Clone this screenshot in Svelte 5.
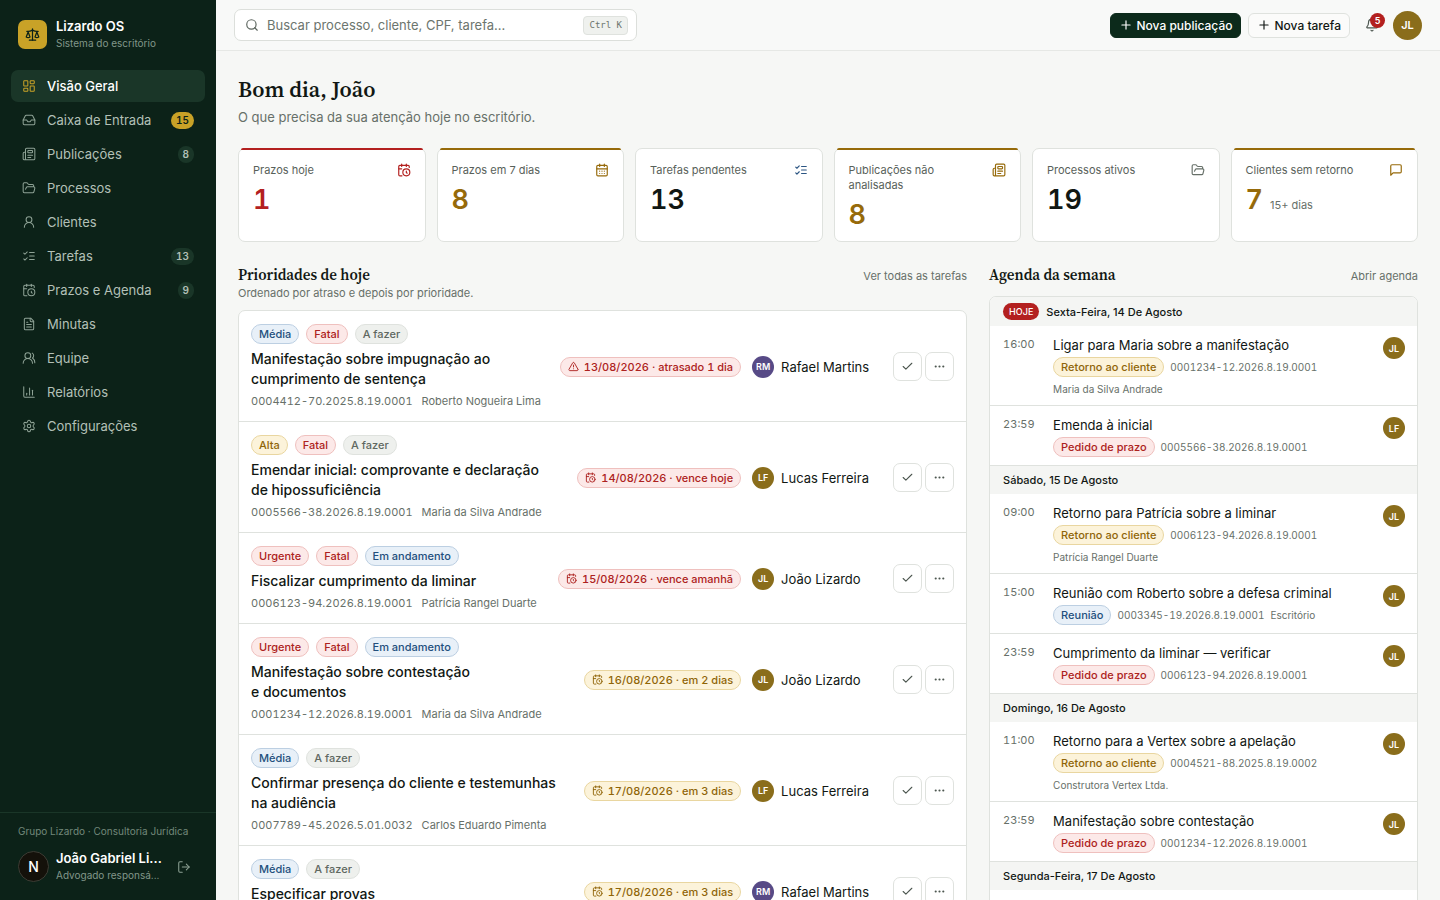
<script>
  const icons = {
    dashboard: '<rect x="3" y="3" width="7" height="9" rx="1"/><rect x="14" y="3" width="7" height="5" rx="1"/><rect x="14" y="12" width="7" height="9" rx="1"/><rect x="3" y="16" width="7" height="5" rx="1"/>',
    inbox: '<path d="M22 12h-6l-2 3h-4l-2-3H2"/><path d="M5.45 5.11 2 12v6a2 2 0 0 0 2 2h16a2 2 0 0 0 2-2v-6l-3.45-6.89A2 2 0 0 0 16.76 4H7.24a2 2 0 0 0-1.79 1.11z"/>',
    news: '<path d="M15 18h-5"/><path d="M18 14h-8"/><path d="M4 22h16a2 2 0 0 0 2-2V4a2 2 0 0 0-2-2H8a2 2 0 0 0-2 2v16a2 2 0 0 1-4 0v-9a2 2 0 0 1 2-2h2"/><rect x="10" y="6" width="8" height="4" rx="1"/>',
    folder: '<path d="m6 14 1.5-2.9A2 2 0 0 1 9.24 10H20a2 2 0 0 1 1.94 2.5l-1.54 6a2 2 0 0 1-1.95 1.5H4a2 2 0 0 1-2-2V5a2 2 0 0 1 2-2h3.9a2 2 0 0 1 1.69.9l.81 1.2a2 2 0 0 0 1.67.9H18a2 2 0 0 1 2 2v2"/>',
    user: '<circle cx="12" cy="8" r="5"/><path d="M20 21a8 8 0 0 0-16 0"/>',
    tasks: '<path d="m3 17 2 2 4-4"/><path d="m3 7 2 2 4-4"/><path d="M13 6h8"/><path d="M13 12h8"/><path d="M13 18h8"/>',
    calclock: '<path d="M21 7.5V6a2 2 0 0 0-2-2H5a2 2 0 0 0-2 2v14a2 2 0 0 0 2 2h3.5"/><path d="M16 2v4"/><path d="M8 2v4"/><path d="M3 10h5"/><path d="M17.5 17.5 16 16.3V14"/><circle cx="16" cy="16" r="6"/>',
    file: '<path d="M15 2H6a2 2 0 0 0-2 2v16a2 2 0 0 0 2 2h12a2 2 0 0 0 2-2V7Z"/><path d="M14 2v4a2 2 0 0 0 2 2h4"/><path d="M10 9H8"/><path d="M16 13H8"/><path d="M16 17H8"/>',
    users: '<path d="M18 21a8 8 0 0 0-16 0"/><circle cx="10" cy="8" r="5"/><path d="M22 20c0-3.37-2-6.5-4-8a5 5 0 0 0-.45-8.3"/>',
    chart: '<path d="M3 3v16a2 2 0 0 0 2 2h16"/><path d="M18 17V9"/><path d="M13 17V5"/><path d="M8 17v-3"/>',
    gear: '<path d="M9.671 4.136a2.34 2.34 0 0 1 4.659 0 2.34 2.34 0 0 0 3.319 1.915 2.34 2.34 0 0 1 2.33 4.033 2.34 2.34 0 0 0 0 3.831 2.34 2.34 0 0 1-2.33 4.033 2.34 2.34 0 0 0-3.319 1.915 2.34 2.34 0 0 1-4.659 0 2.34 2.34 0 0 0-3.32-1.915 2.34 2.34 0 0 1-2.33-4.033 2.34 2.34 0 0 0 0-3.831A2.34 2.34 0 0 1 6.35 6.051a2.34 2.34 0 0 0 3.319-1.915"/><circle cx="12" cy="12" r="3"/>',
    logout: '<path d="m16 17 5-5-5-5"/><path d="M21 12H9"/><path d="M9 21H5a2 2 0 0 1-2-2V5a2 2 0 0 1 2-2h4"/>',
    scale: '<path d="m16 16 3-8 3 8c-.87.65-1.92 1-3 1s-2.13-.35-3-1Z"/><path d="m2 16 3-8 3 8c-.87.65-1.92 1-3 1s-2.13-.35-3-1Z"/><path d="M7 21h10"/><path d="M12 3v18"/><path d="M3 7h2c2 0 5-1 7-2 2 1 5 2 7 2h2"/>',
    caldays: '<path d="M8 2v4"/><path d="M16 2v4"/><rect x="3" y="4" width="18" height="18" rx="2"/><path d="M3 10h18"/><path d="M8 14h.01M12 14h.01M16 14h.01M8 18h.01M12 18h.01M16 18h.01"/>',
    message: '<path d="M21 15a2 2 0 0 1-2 2H7l-4 4V5a2 2 0 0 1 2-2h14a2 2 0 0 1 2 2z"/>',
    search: '<circle cx="11" cy="11" r="8"/><path d="m21 21-4.3-4.3"/>',
    plus: '<path d="M5 12h14"/><path d="M12 5v14"/>',
    bell: '<path d="M10.268 21a2 2 0 0 0 3.464 0"/><path d="M3.262 15.326A1 1 0 0 0 4 17h16a1 1 0 0 0 .74-1.673C19.41 13.956 18 12.499 18 8A6 6 0 0 0 6 8c0 4.499-1.411 5.956-2.738 7.326"/>',
    check: '<path d="M20 6 9 17l-5-5"/>',
    dots: '<circle cx="12" cy="12" r="1"/><circle cx="19" cy="12" r="1"/><circle cx="5" cy="12" r="1"/>',
    alert: '<path d="m21.73 18-8-14a2 2 0 0 0-3.48 0l-8 14A2 2 0 0 0 4 21h16a2 2 0 0 0 1.73-3"/><path d="M12 9v4"/><path d="M12 17h.01"/>'
  };

  const nav = [
    { icon: 'dashboard', label: 'Visão Geral', active: true },
    { icon: 'inbox', label: 'Caixa de Entrada', count: 15, gold: true },
    { icon: 'news', label: 'Publicações', count: 8 },
    { icon: 'folder', label: 'Processos' },
    { icon: 'user', label: 'Clientes' },
    { icon: 'tasks', label: 'Tarefas', count: 13 },
    { icon: 'calclock', label: 'Prazos e Agenda', count: 9 },
    { icon: 'file', label: 'Minutas' },
    { icon: 'users', label: 'Equipe' },
    { icon: 'chart', label: 'Relatórios' },
    { icon: 'gear', label: 'Configurações' }
  ];

  const stats = [
    { label: 'Prazos hoje', value: 1, icon: 'calclock', tone: 'danger', top: true },
    { label: 'Prazos em 7 dias', value: 8, icon: 'caldays', tone: 'warn', top: true },
    { label: 'Tarefas pendentes', value: 13, icon: 'tasks', tone: 'info' },
    { label: 'Publicações não analisadas', value: 8, icon: 'news', tone: 'warn', top: true },
    { label: 'Processos ativos', value: 19, icon: 'folder', tone: 'plain' },
    { label: 'Clientes sem retorno', value: 7, note: '15+ dias', icon: 'message', tone: 'warn', top: true }
  ];

  const media = ['Média', 'blue'];
  const alta = ['Alta', 'yellow'];
  const urgente = ['Urgente', 'red'];
  const fatal = ['Fatal', 'red'];
  const fazer = ['A fazer', 'gray'];
  const andamento = ['Em andamento', 'blue'];

  const people = {
    RM: { name: 'Rafael Martins', cls: 'purple' },
    LF: { name: 'Lucas Ferreira', cls: 'olive' },
    JL: { name: 'João Lizardo', cls: 'olive' }
  };

  const tasks = [
    { tags: [media, fatal, fazer], title: 'Manifestação sobre impugnação ao cumprimento de sentença', num: '0004412-70.2025.8.19.0001', client: 'Roberto Nogueira Lima', due: '13/08/2026 · atrasado 1 dia', tone: 'red', icon: 'alert', who: 'RM' },
    { tags: [alta, fatal, fazer], title: 'Emendar inicial: comprovante e declaração de\u00a0hipossuficiência', num: '0005566-38.2026.8.19.0001', client: 'Maria da Silva Andrade', due: '14/08/2026 · vence hoje', tone: 'red', icon: 'calclock', who: 'LF' },
    { tags: [urgente, fatal, andamento], title: 'Fiscalizar cumprimento da liminar', num: '0006123-94.2026.8.19.0001', client: 'Patrícia Rangel Duarte', due: '15/08/2026 · vence amanhã', tone: 'red', icon: 'calclock', who: 'JL' },
    { tags: [urgente, fatal, andamento], title: 'Manifestação sobre contestação e\u00a0documentos', num: '0001234-12.2026.8.19.0001', client: 'Maria da Silva Andrade', due: '16/08/2026 · em 2 dias', tone: 'yellow', icon: 'calclock', who: 'JL' },
    { tags: [media, fazer], title: 'Confirmar presença do cliente e testemunhas na audiência', num: '0007789-45.2026.5.01.0032', client: 'Carlos Eduardo Pimenta', due: '17/08/2026 · em 3 dias', tone: 'yellow', icon: 'calclock', who: 'LF' },
    { tags: [media, fazer], title: 'Especificar provas', num: '0004412-70.2025.8.19.0001', client: 'Roberto Nogueira Lima', due: '17/08/2026 · em 3 dias', tone: 'yellow', icon: 'calclock', who: 'RM' }
  ];

  const retorno = ['Retorno ao cliente', 'yellow'];
  const prazo = ['Pedido de prazo', 'red'];
  const reuniao = ['Reunião', 'blue'];

  const days = [
    { name: 'Sexta-Feira, 14 De Agosto', today: true, events: [
      { time: '16:00', title: 'Ligar para Maria sobre a manifestação', tag: retorno, num: '0001234-12.2026.8.19.0001', client: 'Maria da Silva Andrade', who: 'JL' },
      { time: '23:59', title: 'Emenda à inicial', tag: prazo, num: '0005566-38.2026.8.19.0001', who: 'LF' }
    ] },
    { name: 'Sábado, 15 De Agosto', events: [
      { time: '09:00', title: 'Retorno para Patrícia sobre a liminar', tag: retorno, num: '0006123-94.2026.8.19.0001', client: 'Patrícia Rangel Duarte', who: 'JL' },
      { time: '15:00', title: 'Reunião com Roberto sobre a defesa criminal', tag: reuniao, num: '0003345-19.2026.8.19.0001', place: 'Escritório', who: 'JL' },
      { time: '23:59', title: 'Cumprimento da liminar — verificar', tag: prazo, num: '0006123-94.2026.8.19.0001', who: 'JL' }
    ] },
    { name: 'Domingo, 16 De Agosto', events: [
      { time: '11:00', title: 'Retorno para a Vertex sobre a apelação', tag: retorno, num: '0004521-88.2025.8.19.0002', client: 'Construtora Vertex Ltda.', who: 'JL' },
      { time: '23:59', title: 'Manifestação sobre contestação', tag: prazo, num: '0001234-12.2026.8.19.0001', who: 'JL' }
    ] },
    { name: 'Segunda-Feira, 17 De Agosto', events: [] }
  ];
</script>

{#snippet icon(name, size = 14, stroke = 2)}
  <svg width={size} height={size} viewBox="0 0 24 24" fill="none" stroke="currentColor" stroke-width={stroke} stroke-linecap="round" stroke-linejoin="round" aria-hidden="true">{@html icons[name]}</svg>
{/snippet}

<div class="shell">
  <aside>
    <div class="brand">
      <span class="logo">{@render icon('scale', 15, 2)}</span>
      <div class="stack">
        <strong>Lizardo OS</strong>
        <small>Sistema do escritório</small>
      </div>
    </div>
    <nav>
      {#each nav as item}
        <a href="#{item.icon}" class:active={item.active}>
          {@render icon(item.icon, 14, 1.75)}
          <span class="nav-label">{item.label}</span>
          {#if item.count}<span class="count" class:gold={item.gold}>{item.count}</span>{/if}
        </a>
      {/each}
    </nav>
    <div class="side-foot">
      <p>Grupo Lizardo · Consultoria Jurídica</p>
      <div class="me">
        <span class="me-avatar">N</span>
        <div class="stack">
          <strong>João Gabriel Li...</strong>
          <small>Advogado responsá...</small>
        </div>
        <button class="logout" aria-label="Sair">{@render icon('logout', 14, 1.75)}</button>
      </div>
    </div>
  </aside>

  <div class="page">
    <header>
      <label class="search">
        {@render icon('search', 14, 2)}
        <input type="text" aria-label="Buscar" placeholder="Buscar processo, cliente, CPF, tarefa..." />
        <kbd>Ctrl K</kbd>
      </label>
      <div class="actions">
        <button class="btn primary">{@render icon('plus', 14, 2)}Nova publicação</button>
        <button class="btn">{@render icon('plus', 14, 2)}Nova tarefa</button>
        <button class="bell" aria-label="Notificações">{@render icon('bell', 14, 2)}<span>5</span></button>
        <button class="avatar olive large">JL</button>
      </div>
    </header>

    <main>
      <h1>Bom dia, João</h1>
      <p class="lead">O que precisa da sua atenção hoje no escritório.</p>

      <section class="stats">
        {#each stats as s}
          <article class="stat {s.tone}" class:top={s.top}>
            <div class="stat-head">
              <span>{s.label}</span>
              {@render icon(s.icon, 14, 2)}
            </div>
            <div class="stat-value"><b>{s.value}</b>{#if s.note}<small>{s.note}</small>{/if}</div>
          </article>
        {/each}
      </section>

      <div class="columns">
        <section>
          <div class="section-head">
            <div>
              <h2>Prioridades de hoje</h2>
              <p>Ordenado por atraso e depois por prioridade.</p>
            </div>
            <a href="#tarefas">Ver todas as tarefas</a>
          </div>
          <div class="panel">
            {#each tasks as t}
              <article class="task">
                <div class="task-main">
                  <div class="tags">
                    {#each t.tags as [text, tone]}<span class="tag {tone}">{text}</span>{/each}
                  </div>
                  <h3>{t.title}</h3>
                  <div class="meta"><span>{t.num}</span><span>{t.client}</span></div>
                </div>
                <span class="tag due {t.tone}">{@render icon(t.icon, 11, 2)}{t.due}</span>
                <div class="owner">
                  <span class="avatar {people[t.who].cls}">{t.who}</span>{people[t.who].name}
                </div>
                <div class="task-actions">
                  <button aria-label="Concluir">{@render icon('check', 13, 2)}</button>
                  <button aria-label="Mais ações">{@render icon('dots', 13, 2)}</button>
                </div>
              </article>
            {/each}
          </div>
        </section>

        <section>
          <div class="section-head agenda-head">
            <h2>Agenda da semana</h2>
            <a href="#agenda">Abrir agenda</a>
          </div>
          <div class="panel">
            {#each days as d}
              <div class="day">{#if d.today}<span class="today">HOJE</span>{/if}{d.name}</div>
              {#each d.events as e}
                <article class="event">
                  <time>{e.time}</time>
                  <div class="event-main">
                    <h4>{e.title}</h4>
                    <div class="event-meta">
                      <span class="tag {e.tag[1]}">{e.tag[0]}</span>
                      <span>{e.num}</span>
                      {#if e.place}<span>{e.place}</span>{/if}
                    </div>
                    {#if e.client}<p>{e.client}</p>{/if}
                  </div>
                  <span class="avatar {people[e.who].cls}">{e.who}</span>
                </article>
              {/each}
            {/each}
          </div>
        </section>
      </div>
    </main>
  </div>
</div>

<style>
  :global(body) { background: #f6f7f5; }
  :global(*) { box-sizing: border-box; }
  h1, h2, h3, h4, p { margin: 0; }
  a { color: inherit; text-decoration: none; }
  button { font: inherit; color: inherit; border: 0; background: none; padding: 0; cursor: pointer; }
  svg { flex: none; display: block; }

  .shell {
    display: grid;
    grid-template-columns: 216px minmax(0, 1fr);
    height: 100vh;
    font-family: Inter, sans-serif;
    font-size: 13px;
    color: #111713;
    overflow: hidden;
  }

  aside { background: #0c2218; color: #b3c0b7; display: flex; flex-direction: column; }
  .brand { display: flex; align-items: center; gap: 9px; padding: 18px 18px 19px; }
  .logo { width: 29px; height: 29px; border-radius: 7px; background: #c9a227; color: #0c2218; display: grid; place-items: center; }
  .stack { display: flex; flex-direction: column; min-width: 0; flex: 1; }
  .stack strong { color: #fff; font-weight: 600; font-size: 13px; line-height: 17px; }
  .stack small { font-size: 10px; line-height: 16px; color: #82978a; }
  .stack strong, .stack small { white-space: nowrap; }
  nav { display: flex; flex-direction: column; gap: 2px; padding: 0 11px; flex: 1; }
  nav a { display: flex; align-items: center; gap: 11px; height: 32px; padding: 0 11px; border-radius: 7px; }
  nav a svg { color: #8fa396; }
  nav a.active { background: #1a3628; color: #fff; font-weight: 500; }
  nav a.active svg { color: #c9a227; }
  .nav-label { flex: 1; }
  .count { min-width: 16px; height: 17px; line-height: 17px; padding: 0 5px; border-radius: 9px; background: #1a3628; color: #b3c0b7; font-size: 10px; font-weight: 600; text-align: center; font-variant-numeric: tabular-nums; }
  .count.gold { background: #c9a227; color: #0c2218; }
  .side-foot { border-top: 1px solid #1a3628; padding: 10px 18px 17px; }
  .side-foot p { font-size: 10px; line-height: 16px; color: #72887a; margin-bottom: 11px; white-space: nowrap; }
  .me { display: flex; align-items: center; gap: 7px; }
  .me-avatar { width: 31px; height: 31px; flex: none; border-radius: 50%; background: #14110a; border: 1px solid #3c3c34; color: #fff; font-size: 14px; font-weight: 500; display: grid; place-items: center; }
  .logout { width: 29px; height: 29px; display: grid; place-items: center; color: #8fa396; }

  .page { display: flex; flex-direction: column; min-width: 0; min-height: 0; }
  header { display: flex; align-items: center; justify-content: space-between; height: 51px; flex: none; padding: 0 18px; border-bottom: 1px solid #e6e8e5; background: #f8f9f8; }
  .search { flex: 0 1 403px; height: 32px; display: flex; align-items: center; gap: 8px; padding: 0 8px 0 10px; background: #fff; border: 1px solid #dcdfdb; border-radius: 7px; color: #5d665f; }
  .search input { flex: 1; min-width: 0; border: 0; outline: 0; background: none; font: inherit; color: inherit; padding: 0; }
  .search input::placeholder { color: #6c756e; opacity: 1; }
  kbd { font-family: "DejaVu Sans Mono", monospace; font-size: 9px; line-height: 17px; padding: 0 5px; border: 1px solid #dfe2de; border-radius: 4px; background: #eff1ee; color: #6c756e; }
  .actions { display: flex; align-items: center; gap: 7px; }
  .btn { display: flex; align-items: center; gap: 3px; height: 25px; padding: 0 8px; border: 1px solid #dfe2de; border-radius: 6px; background: #fbfbfa; font-weight: 500; font-size: 12px; white-space: nowrap; }
  .btn.primary { background: #0c2a1b; border-color: #0c2a1b; color: #fff; }
  .bell { position: relative; width: 29px; height: 29px; display: grid; place-items: center; color: #4d5750; }
  .bell span { position: absolute; top: 2px; right: 1px; width: 15px; height: 15px; border-radius: 50%; background: #b3201f; color: #fff; font-size: 9px; line-height: 15px; font-weight: 600; }

  .avatar { width: 22px; height: 22px; flex: none; border-radius: 50%; color: #fff; font-size: 9px; font-weight: 600; display: grid; place-items: center; }
  .avatar.large { width: 29px; height: 29px; font-size: 11px; }
  .olive { background: #8a6d1b; }
  .purple { background: #574a86; }

  main { flex: 1; min-height: 0; overflow-y: auto; scrollbar-width: none; padding: 24px 22px; }
  h1, h2 { font-family: "Source Serif 4", "Liberation Serif", serif; font-weight: 600; }
  h1 { font-size: 22px; line-height: 29px; }
  .lead { font-size: 13px; line-height: 18px; margin-top: 4px; color: #677069; }

  .stats { display: grid; grid-template-columns: repeat(6, minmax(0, 1fr)); gap: 11px; margin-top: 22px; }
  .stat { position: relative; min-height: 94px; padding: 14px 14px 10px; background: #fff; border: 1px solid #dfe2de; border-radius: 7px; }
  .stat.top::before { content: ""; position: absolute; top: -1px; left: 2px; right: 2px; height: 2px; border-radius: 2px 2px 0 0; background: var(--tone); }
  .stat-head { display: flex; justify-content: space-between; gap: 8px; font-size: 11px; line-height: 15px; color: #58615a; }
  .stat-head svg { color: var(--tone); }
  .stat-value { display: flex; align-items: baseline; gap: 7px; margin-top: 8px; line-height: 28px; }
  .stat-value b { font-size: 27px; font-weight: 600; color: var(--value); font-variant-numeric: tabular-nums; }
  .stat-value small { font-size: 11px; color: #677069; }
  .danger { --tone: #b3201f; --value: #b3201f; }
  .warn { --tone: #966a0a; --value: #966a0a; }
  .info { --tone: #2a5482; --value: #111713; }
  .plain { --tone: #677069; --value: #111713; }

  .columns { display: grid; grid-template-columns: minmax(0, 17fr) minmax(0, 10fr); gap: 22px; margin-top: 22px; }
  .columns > section { display: flex; flex-direction: column; }
  .columns .panel { flex: 1; }
  .section-head { display: flex; justify-content: space-between; align-items: flex-start; margin-bottom: 9px; }
  .agenda-head { margin-bottom: 8px; }
  h2 { font-size: 15px; line-height: 22px; }
  .section-head p { font-size: 11px; line-height: 15px; color: #677069; }
  .section-head a { font-size: 11px; line-height: 24px; color: #677069; }
  .panel { background: #fff; border: 1px solid #dfe2de; border-radius: 7px; overflow: hidden; }

  .task { display: flex; align-items: center; gap: 11px; padding: 13px 12px 12px; border-bottom: 1px solid #dfe2de; }
  .task-main { flex: 1; min-width: 0; }
  .tags { display: flex; gap: 7px; }
  .tag { display: inline-flex; align-items: center; height: 20px; padding: 0 7px; border: 1px solid; border-radius: 10px; font-size: 11px; font-weight: 500; white-space: nowrap; }
  .tag.blue { background: #e8f0f8; border-color: #bccfe2; color: #234f7d; }
  .tag.red { background: #fce9e8; border-color: #efc0be; color: #ad2220; }
  .tag.yellow { background: #fcf3da; border-color: #e9d6a0; color: #8f6508; }
  .tag.gray { background: #eef0ed; border-color: #dfe2de; color: #5f6861; }
  h3 { max-width: 312px; margin-top: 5px; font-size: 14px; line-height: 20px; font-weight: 500; }
  .meta { display: flex; gap: 9px; margin-top: 4px; font-size: 11px; line-height: 16px; color: #677069; font-variant-numeric: tabular-nums; }
  .due { gap: 5px; font-variant-numeric: tabular-nums; }
  .owner { display: flex; align-items: center; gap: 7px; width: 130px; white-space: nowrap; }
  .task-actions { display: flex; gap: 3px; }
  .task-actions button { width: 29px; height: 29px; border: 1px solid #dfe2de; border-radius: 7px; display: grid; place-items: center; color: #4d5750; }

  .day { display: flex; align-items: center; gap: 7px; padding: 6px 13px; background: #f4f5f3; font-size: 11px; line-height: 16px; font-weight: 500; }
  .today { background: #b3201f; color: #fff; font-size: 9px; line-height: 17px; padding: 0 6px; border-radius: 9px; }
  .event { display: flex; gap: 13px; padding: 10px 12px 8px 13px; border-bottom: 1px solid #dfe2de; }
  time { width: 37px; font-size: 11px; line-height: 17px; color: #677069; font-variant-numeric: tabular-nums; }
  .event-main { flex: 1; min-width: 0; }
  h4 { font-size: 13px; line-height: 18px; font-weight: 400; }
  .event-meta { display: flex; align-items: center; gap: 6px; margin-top: 3px; font-size: 10px; color: #677069; font-variant-numeric: tabular-nums; }
  .event-main p { margin-top: 4px; font-size: 10px; line-height: 16px; color: #677069; }
  .event .avatar { margin-top: 1px; }
</style>
